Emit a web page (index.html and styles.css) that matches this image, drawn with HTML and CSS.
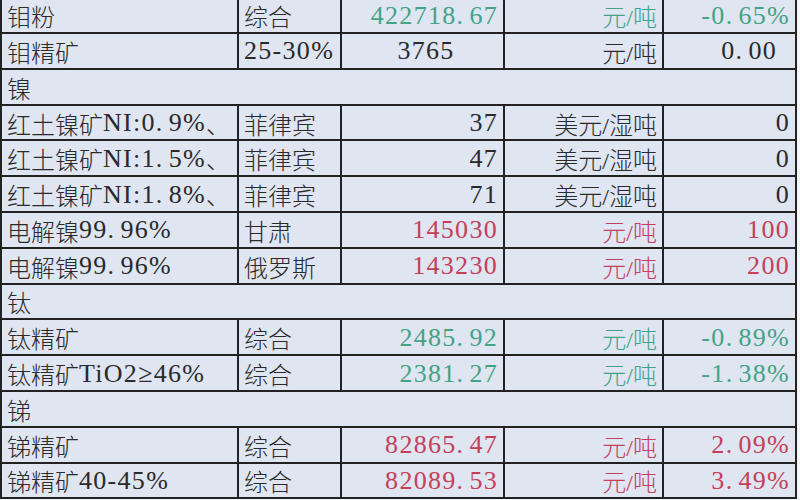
FILE: index.html
```html
<!DOCTYPE html>
<html lang="zh-CN">
<head>
<meta charset="utf-8">
<title>金属价格</title>
<link rel="stylesheet" href="styles.css">
</head>
<body>
<div class="sheet">
  <div class="c">钼粉</div><div class="c">综合</div><div class="c r n g">422718<span class="d">.</span>67</div><div class="c r g">元/吨</div><div class="c r n g">-0<span class="d">.</span>65%</div>
  <div class="c">钼精矿</div><div class="c n">25-30%</div><div class="c m n">3765</div><div class="c r">元/吨</div><div class="c r n pad">0<span class="d">.</span>00</div>
  <div class="c sec">镍</div>
  <div class="c">红土镍矿<span class="n">NI:0<span class="d">.</span>9%</span>、</div><div class="c">菲律宾</div><div class="c r n">37</div><div class="c r">美元/湿吨</div><div class="c r n">0</div>
  <div class="c">红土镍矿<span class="n">NI:1<span class="d">.</span>5%</span>、</div><div class="c">菲律宾</div><div class="c r n">47</div><div class="c r">美元/湿吨</div><div class="c r n">0</div>
  <div class="c">红土镍矿<span class="n">NI:1<span class="d">.</span>8%</span>、</div><div class="c">菲律宾</div><div class="c r n">71</div><div class="c r">美元/湿吨</div><div class="c r n">0</div>
  <div class="c">电解镍<span class="n">99<span class="d">.</span>96%</span></div><div class="c">甘肃</div><div class="c r n red">145030</div><div class="c r red">元/吨</div><div class="c r n red">100</div>
  <div class="c">电解镍<span class="n">99<span class="d">.</span>96%</span></div><div class="c">俄罗斯</div><div class="c r n red">143230</div><div class="c r red">元/吨</div><div class="c r n red">200</div>
  <div class="c sec">钛</div>
  <div class="c">钛精矿</div><div class="c">综合</div><div class="c r n g">2485<span class="d">.</span>92</div><div class="c r g">元/吨</div><div class="c r n g">-0<span class="d">.</span>89%</div>
  <div class="c">钛精矿<span class="n">TiO2≥46%</span></div><div class="c">综合</div><div class="c r n g">2381<span class="d">.</span>27</div><div class="c r g">元/吨</div><div class="c r n g">-1<span class="d">.</span>38%</div>
  <div class="c sec">锑</div>
  <div class="c">锑精矿</div><div class="c">综合</div><div class="c r n red">82865<span class="d">.</span>47</div><div class="c r red">元/吨</div><div class="c r n red">2<span class="d">.</span>09%</div>
  <div class="c">锑精矿<span class="n">40-45%</span></div><div class="c">综合</div><div class="c r n red">82089<span class="d">.</span>53</div><div class="c r red">元/吨</div><div class="c r n red">3<span class="d">.</span>49%</div>
</div>
</body>
</html>
```
FILE: styles.css
```css
html, body {
  margin: 0;
  padding: 0;
  background: #f4f6fa;
  overflow: hidden;
}

.sheet {
  width: 797px;
  margin-top: -1.8px;
  display: grid;
  grid-template-columns: 237px 103px 163px 159px 133px;
  grid-auto-rows: 35.8px;
  border-left: 2px solid #222;
  box-sizing: border-box;
  background: #dfe5f1;
  font-family: "Liberation Serif", "Noto Sans CJK SC", serif;
  font-size: 24px;
  font-weight: 300;
  color: #2a2a2a;
}

.c {
  box-sizing: border-box;
  border-right: 2px solid #222;
  border-bottom: 2px solid #222;
  display: flex;
  align-items: center;
  padding: 1px 5px 0 5px;
  white-space: nowrap;
  overflow: hidden;
}

.sec {
  grid-column: 1 / -1;
}

.r {
  justify-content: flex-end;
  padding-right: 5px;
}

.m {
  justify-content: center;
  padding-left: 12px;
}

.n {
  font-size: 26px;
  letter-spacing: 1.3px;
}

.d {
  margin-right: 5px;
}

.pad {
  padding-right: 18px;
}

.g {
  color: #44a384;
}

.red {
  color: #c4405a;
}
```
